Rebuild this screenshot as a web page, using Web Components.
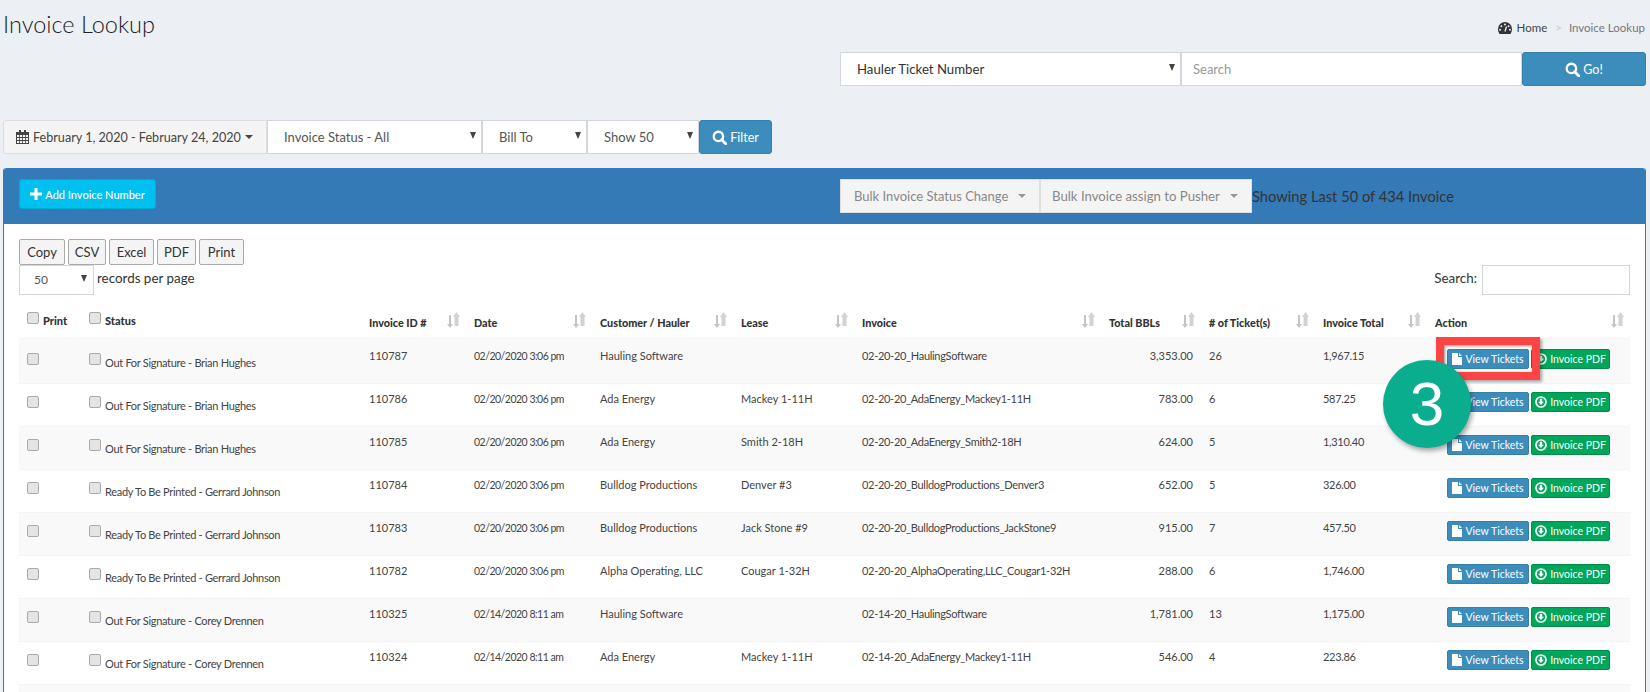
<!DOCTYPE html>
<html>
<head>
<meta charset="utf-8">
<title>Invoice Lookup</title>
<style>
  html, body { margin: 0; height: 692px; overflow: hidden; background: #ecf0f5; }
  body { font-family: "Lato", "Liberation Sans", sans-serif; color: #333; }
</style>
</head>
<body>
<invoice-page></invoice-page>

<script>
const ICONS = {
  search: `<svg viewBox="0 0 14 14" width="15" height="15"><circle cx="6" cy="6" r="4.4" fill="none" stroke="currentColor" stroke-width="2.2"/><path d="M9 9l4 4" stroke="currentColor" stroke-width="2.6" stroke-linecap="round"/></svg>`,
  calendar: `<svg viewBox="0 0 13 14" width="13" height="14"><path fill="#444" d="M0 2h13v12H0z"/><path fill="#444" d="M3 0h2v3H3zM8 0h2v3H8z"/><path fill="#f4f4f4" d="M1 5h2.2v2H1zM4 5h2.2v2H4zM7 5h2.2v2H7zM10 5h2v2h-2zM1 8h2.2v2H1zM4 8h2.2v2H4zM7 8h2.2v2H7zM10 8h2v2h-2zM1 11h2.2v2H1zM4 11h2.2v2H4zM7 11h2.2v2H7zM10 11h2v2h-2z"/></svg>`,
  dashboard: `<svg viewBox="0 0 14 12" width="14" height="12"><path fill="#333" d="M7 0a7 7 0 0 1 7 7c0 1.900-.6 3.500-1.500 5h-11C.6 10.500 0 8.900 0 7a7 7 0 0 1 7-7z"/><circle cx="7" cy="2.500" r="1" fill="#ecf0f5"/><circle cx="3.400" cy="4.200" r="1" fill="#ecf0f5"/><circle cx="10.600" cy="4.200" r="1" fill="#ecf0f5"/><circle cx="2" cy="7.800" r="1" fill="#ecf0f5"/><circle cx="12" cy="7.800" r="1" fill="#ecf0f5"/><path d="M7 9.500L8.500 4.500" stroke="#ecf0f5" stroke-width="1.300"/></svg>`,
  sort: `<svg viewBox="0 0 13 16" width="13" height="16"><path fill="#c4c4c4" d="M2 3h2v9h2l-3 4-3-4h2z"/><path fill="#d2d2d2" d="M9.500 0L13 5h-1.500v9h-4V5H6z"/></svg>`,
  file: `<svg viewBox="0 0 10 12" width="10" height="12"><path fill="#fff" d="M0 0h6v4h4v8H0z"/><path fill="#fff" d="M7 0l3 3H7z"/></svg>`,
  pdf: `<svg viewBox="0 0 12 12" width="12" height="12"><circle cx="6" cy="6" r="5" fill="none" stroke="#fff" stroke-width="1.700"/><path fill="#fff" d="M4.800 2.800h2.400v3H9L6 9 3 5.800h1.800z"/></svg>`,
  plus: `<svg viewBox="0 0 12 12" width="12" height="12"><path fill="#fff" d="M4.500 0h3v4.500H12v3H7.500V12h-3V7.500H0v-3h4.500z"/></svg>`
}

class PageHeader extends HTMLElement {
  constructor() {
    super()
    this.attachShadow({ mode: "open" })
    this.shadowRoot.innerHTML = `
      <style>
        :host { display: flex; justify-content: space-between; align-items: flex-start; padding: 11px 5px 0 3px; height: 41px; }
        h1 { margin: 0; font-size: 23.5px; font-weight: 300; line-height: 27px; color: #222; }
        ol { margin: 10px 0 0; padding: 0; list-style: none; display: flex; align-items: center; font-size: 11.5px; line-height: 14px; color: #444; }
        svg { margin-right: 5px; }
        .sep { color: #ccc; margin: 0 7px 0 8px; }
        .current { color: #777; }
      </style>
      <h1>Invoice Lookup</h1>
      <ol>
        ${ICONS.dashboard}<li>Home</li><li class="sep">&gt;</li><li class="current">Invoice Lookup</li>
      </ol>
    `
  }
}

// select look-alike, the arrow is drawn with borders like the browser one
class FieldBox extends HTMLElement {
  constructor() {
    super()
    this.attachShadow({ mode: "open" })
    this.shadowRoot.innerHTML = `
      <style>
        :host { display: flex; align-items: center; box-sizing: border-box; height: 34px; background: #fff; border: 1px solid #d2d6de; padding: 0 5px 0 16px; font-size: 13px; color: #555; white-space: nowrap; }
        :host([placeholder]) { padding-left: 11px; color: #999; }
        :host([dark]) { color: #333; font-size: 13.2px; }
        .label { flex: 1; }
        .arrow { width: 0; height: 0; border: 3px solid transparent; border-top: 7px solid #444; border-bottom: 0; margin-top: -3px; }
        :host([placeholder]) .arrow { display: none; }
      </style>
      <span class="label"><slot></slot></span><span class="arrow"></span>
    `
  }
}

class BlueButton extends HTMLElement {
  constructor() {
    super()
    this.attachShadow({ mode: "open" })
    this.shadowRoot.innerHTML = `
      <style>
        :host { display: flex; align-items: center; justify-content: center; gap: 3px; box-sizing: border-box; height: 34px; background: #3c8dbc; border: 1px solid #367fa9; border-radius: 3px; color: #fff; font-size: 12.5px; }
        svg { display: block; }
      </style>
      ${ICONS.search}<span><slot></slot></span>
    `
  }
}

class LookupBar extends HTMLElement {
  constructor() {
    super()
    this.attachShadow({ mode: "open" })
    this.shadowRoot.innerHTML = `
      <style>
        :host { display: grid; grid-template-columns: 341px 341px 124px; margin-left: 840px; width: 806px; }
      </style>
      <field-box dark>Hauler Ticket Number</field-box>
      <field-box placeholder>Search</field-box>
      <blue-button>Go!</blue-button>
    `
  }
}

class FilterBar extends HTMLElement {
  constructor() {
    super()
    this.attachShadow({ mode: "open" })
    this.shadowRoot.innerHTML = `
      <style>
        :host { display: grid; grid-template-columns: 264px 215px 105px 112px 73px; margin: 34px 0 0 3px; width: 769px; }
        .range { display: flex; align-items: center; gap: 4px; box-sizing: border-box; height: 34px; padding-left: 12px; background: #f4f4f4; border: 1px solid #ddd; border-radius: 3px 0 0 3px; font-size: 12.6px; color: #444; white-space: nowrap; }
        .caret { width: 0; height: 0; border: 4px solid transparent; border-top-color: #444; border-bottom: 0; margin-left: 0; }
      </style>
      <div class="range">${ICONS.calendar}<span>February 1, 2020 - February 24, 2020</span><i class="caret"></i></div>
      <field-box>Invoice Status - All</field-box>
      <field-box>Bill To</field-box>
      <field-box>Show 50</field-box>
      <blue-button>Filter</blue-button>
    `
  }
}

class PanelHeading extends HTMLElement {
  constructor() {
    super()
    this.attachShadow({ mode: "open" })
    this.shadowRoot.innerHTML = `
      <style>
        :host { display: flex; align-items: flex-start; box-sizing: border-box; height: 56px; padding: 11px 0 0 15px; background: #337ab7; border-radius: 3px 3px 0 0; }
        .add { display: flex; align-items: center; justify-content: center; gap: 3px; box-sizing: border-box; width: 137px; height: 30px; background: #00c0ef; border: 1px solid #00acd6; border-radius: 3px; color: #fff; font-size: 11px; font-weight: 500; }
        .bulk { display: grid; grid-template-columns: 200px 212px; margin-left: 684px; }
        .bulk div { display: flex; align-items: center; gap: 10px; box-sizing: border-box; height: 34px; padding-left: 13px; background: #f4f4f4; border: 1px solid #ddd; color: #888; font-size: 13px; white-space: nowrap; }
        .bulk div + div { padding-left: 11px; font-size: 13.2px; }
        .bulk i { width: 0; height: 0; border: 4px solid transparent; border-top-color: #999; border-bottom: 0; }
        .showing { font-size: 14.7px; line-height: 34px; color: #333; white-space: nowrap; }
      </style>
      <div class="add">${ICONS.plus}<span>Add Invoice Number</span></div>
      <div class="bulk">
        <div>Bulk Invoice Status Change<i></i></div>
        <div>Bulk Invoice assign to Pusher<i></i></div>
      </div>
      <span class="showing">Showing Last 50 of 434 Invoice</span>
    `
  }
}

class TableTools extends HTMLElement {
  constructor() {
    super()
    this.attachShadow({ mode: "open" })
    const buttons = [["Copy", 46], ["CSV", 38], ["Excel", 45], ["PDF", 39], ["Print", 45]]
    this.shadowRoot.innerHTML = `
      <style>
        :host { display: block; height: 73px; position: relative; }
        .export { display: flex; gap: 3px; padding-top: 15px; }
        .export span { display: flex; align-items: center; justify-content: center; box-sizing: border-box; height: 26px; background: #f4f4f4; border: 1px solid #aaa; border-radius: 2px; font-size: 13px; color: #333; }
        .row { display: flex; justify-content: space-between; align-items: flex-start; }
        .left, .right { display: flex; align-items: flex-start; font-size: 13.4px; line-height: 27px; color: #333; }
        .pages { display: flex; align-items: center; justify-content: space-between; box-sizing: border-box; width: 75px; height: 30px; background: #fff; border: 1px solid #d2d6de; padding: 0 6px 0 14px; margin-right: 3px; font-size: 12px; line-height: 14px; color: #555; }
        .pages i { width: 0; height: 0; border: 3px solid transparent; border-top: 7px solid #444; border-bottom: 0; margin-top: -3px; }
        .box { box-sizing: border-box; width: 148px; height: 30px; background: #fff; border: 1px solid #d2d6de; margin-left: 5px; }
      </style>
      <div class="export">${buttons.map(item => `<span style="width:${item[1]}px">${item[0]}</span>`).join('')}</div>
      <div class="row">
        <div class="left"><div class="pages">50<i></i></div>records per page</div>
        <div class="right">Search:<div class="box"></div></div>
      </div>
    `
  }
}

class InvoiceTable extends HTMLElement {
  constructor() {
    super()
    this.attachShadow({ mode: "open" })
  }
  getTemplate() {
    const brian = "Out For Signature - Brian Hughes"
    const gerrard = "Ready To Be Printed - Gerrard Johnson"
    const corey = "Out For Signature - Corey Drennen"
    const feb20 = "02/20/2020 3:06 pm"
    const feb14 = "02/14/2020 8:11 am"
    const rows = [
      [brian, "110787", feb20, "Hauling Software", "", "02-20-20_HaulingSoftware", "3,353.00", "26", "1,967.15"],
      [brian, "110786", feb20, "Ada Energy", "Mackey 1-11H", "02-20-20_AdaEnergy_Mackey1-11H", "783.00", "6", "587.25"],
      [brian, "110785", feb20, "Ada Energy", "Smith 2-18H", "02-20-20_AdaEnergy_Smith2-18H", "624.00", "5", "1,310.40"],
      [gerrard, "110784", feb20, "Bulldog Productions", "Denver #3", "02-20-20_BulldogProductions_Denver3", "652.00", "5", "326.00"],
      [gerrard, "110783", feb20, "Bulldog Productions", "Jack Stone #9", "02-20-20_BulldogProductions_JackStone9", "915.00", "7", "457.50"],
      [gerrard, "110782", feb20, "Alpha Operating, LLC", "Cougar 1-32H", "02-20-20_AlphaOperating,LLC_Cougar1-32H", "288.00", "6", "1,746.00"],
      [corey, "110325", feb14, "Hauling Software", "", "02-14-20_HaulingSoftware", "1,781.00", "13", "1,175.00"],
      [corey, "110324", feb14, "Ada Energy", "Mackey 1-11H", "02-14-20_AdaEnergy_Mackey1-11H", "546.00", "4", "223.86"],
    ]
    const widths = [62, 280, 105, 126, 141, 121, 247, 100, 114, 112, 203]
    const heads = ["Invoice ID #", "Date", "Customer / Hauler", "Lease", "Invoice", "Total BBLs", "# of Ticket(s)", "Invoice Total", "Action"]
    const template = document.createElement("template")
    template.innerHTML = `
      <table>
        <colgroup>${widths.map(w => `<col style="width:${w}px">`).join('')}</colgroup>
        <thead>
          <tr>
            <th class="plain"><input type="checkbox"><b>Print</b></th>
            <th class="plain"><input type="checkbox"><b>Status</b></th>
            ${heads.map(h => `<th><b>${h}</b>${ICONS.sort}</th>`).join('')}
          </tr>
        </thead>
        <tbody>
          ${rows.map(r => `
            <tr>
              <td><input type="checkbox"></td>
              <td class="status"><input type="checkbox"><span>${r[0]}</span></td>
              <td>${r[1]}</td>
              <td class="date">${r[2]}</td>
              <td>${r[3]}</td>
              <td>${r[4]}</td>
              <td class="file">${r[5]}</td>
              <td class="num">${r[6]}</td>
              <td>${r[7]}</td>
              <td class="total">${r[8]}</td>
              <td class="action">
                <span class="btn view">${ICONS.file}View Tickets</span><span class="btn pdf">${ICONS.pdf}Invoice PDF</span>
              </td>
            </tr>
          `).join('')}
          <tr><td colspan="11"></td></tr>
        </tbody>
      </table>
      ${this.getStyles()}
    `
    return template
  }
  getStyles() {
    return `
    <style>
      :host { display: block; }
      table { border-collapse: collapse; table-layout: fixed; width: 1611px; font-size: 11px; color: #444; }
      th { position: relative; height: 41px; box-sizing: border-box; padding: 0 0 0 8px; text-align: left; font-size: 11px; color: #333; }
      th b { position: relative; top: 5px; font-size: 10.8px; }
      th.plain b { top: 1px; font-size: 11px; }
      th svg { position: absolute; right: 6px; top: 15px; }
      th input { margin-right: 4px; vertical-align: 0; }
      td { height: 43px; box-sizing: border-box; padding: 8px 0 0 8px; vertical-align: top; border-top: 1px solid #f4f4f4; line-height: 14px; white-space: nowrap; }
      tbody tr:first-child td { height: 45px; padding-top: 10px; }
      tbody tr:nth-child(odd) { background: #f9f9f9; }
      td.num { text-align: right; padding-right: 8px; }
      td.date { font-size: 10.5px; letter-spacing: -.5px; }
      td.file { letter-spacing: -.3px; }
      td.total { letter-spacing: -.3px; }
      td.status span { position: relative; top: 7px; margin-left: 4px; letter-spacing: -.3px; }
      input { appearance: none; -webkit-appearance: none; box-sizing: border-box; width: 12px; height: 12px; margin: 4px 0 0; background: #e4e4e4; border: 1px solid #aaa; border-radius: 2px; vertical-align: top; }
      .btn { display: inline-flex; align-items: center; justify-content: center; gap: 3px; box-sizing: border-box; height: 20px; border-radius: 2px; color: #fff; font-size: 10.5px; vertical-align: top; margin-left: 2px; }
      .btn:first-child { margin-left: 12px; }
      .view { width: 82px; background: #3c8dbc; border: 1px solid #367fa9; }
      .pdf { width: 79px; background: #00a65a; border: 1px solid #008d4c; }
    </style>
    `
  }
  connectedCallback() {
    this.shadowRoot.appendChild(this.getTemplate().content.cloneNode(true))
  }
}

// the tutorial marks that lie over the table
class StepMarker extends HTMLElement {
  constructor() {
    super()
    this.attachShadow({ mode: "open" })
    this.shadowRoot.innerHTML = `
      <style>
        :host { position: absolute; left: 0; top: 0; }
        .frame { position: absolute; left: 1436px; top: 337px; width: 104px; height: 43px; box-sizing: border-box; border: 8px solid #fc4445; box-shadow: 2px 2px 3px rgba(0,0,0,.35), inset 1px 1px 3px rgba(0,0,0,.4); }
        .dot { position: absolute; left: 1383px; top: 360px; width: 88px; height: 88px; border-radius: 50%; background: #0aae8f; box-shadow: 2px 3px 5px rgba(0,0,0,.35); color: #fff; font: 62px/88px "Liberation Sans", sans-serif; text-align: center; }
      </style>
      <div class="frame"></div>
      <div class="dot"><slot></slot></div>
    `
  }
}

class InvoicePage extends HTMLElement {
  constructor() {
    super()
    this.attachShadow({ mode: "open" })
    this.shadowRoot.innerHTML = `
      <style>
        :host { display: block; position: relative; height: 692px; overflow: hidden; background: #ecf0f5; }
        .panel { box-sizing: border-box; width: 1643px; height: 600px; margin: 14px 0 0 3px; background: #fff; border: 1px solid #337ab7; border-top: 0; border-radius: 3px 3px 0 0; }
        .body { padding: 0 15px; }
      </style>
      <page-header></page-header>
      <lookup-bar></lookup-bar>
      <filter-bar></filter-bar>
      <section class="panel">
        <panel-heading></panel-heading>
        <div class="body">
          <table-tools></table-tools>
          <invoice-table></invoice-table>
        </div>
      </section>
      <step-marker>3</step-marker>
    `
  }
}

customElements.define('page-header', PageHeader)
customElements.define('field-box', FieldBox)
customElements.define('blue-button', BlueButton)
customElements.define('lookup-bar', LookupBar)
customElements.define('filter-bar', FilterBar)
customElements.define('panel-heading', PanelHeading)
customElements.define('table-tools', TableTools)
customElements.define('invoice-table', InvoiceTable)
customElements.define('step-marker', StepMarker)
customElements.define('invoice-page', InvoicePage)
</script>
</body>
</html>
